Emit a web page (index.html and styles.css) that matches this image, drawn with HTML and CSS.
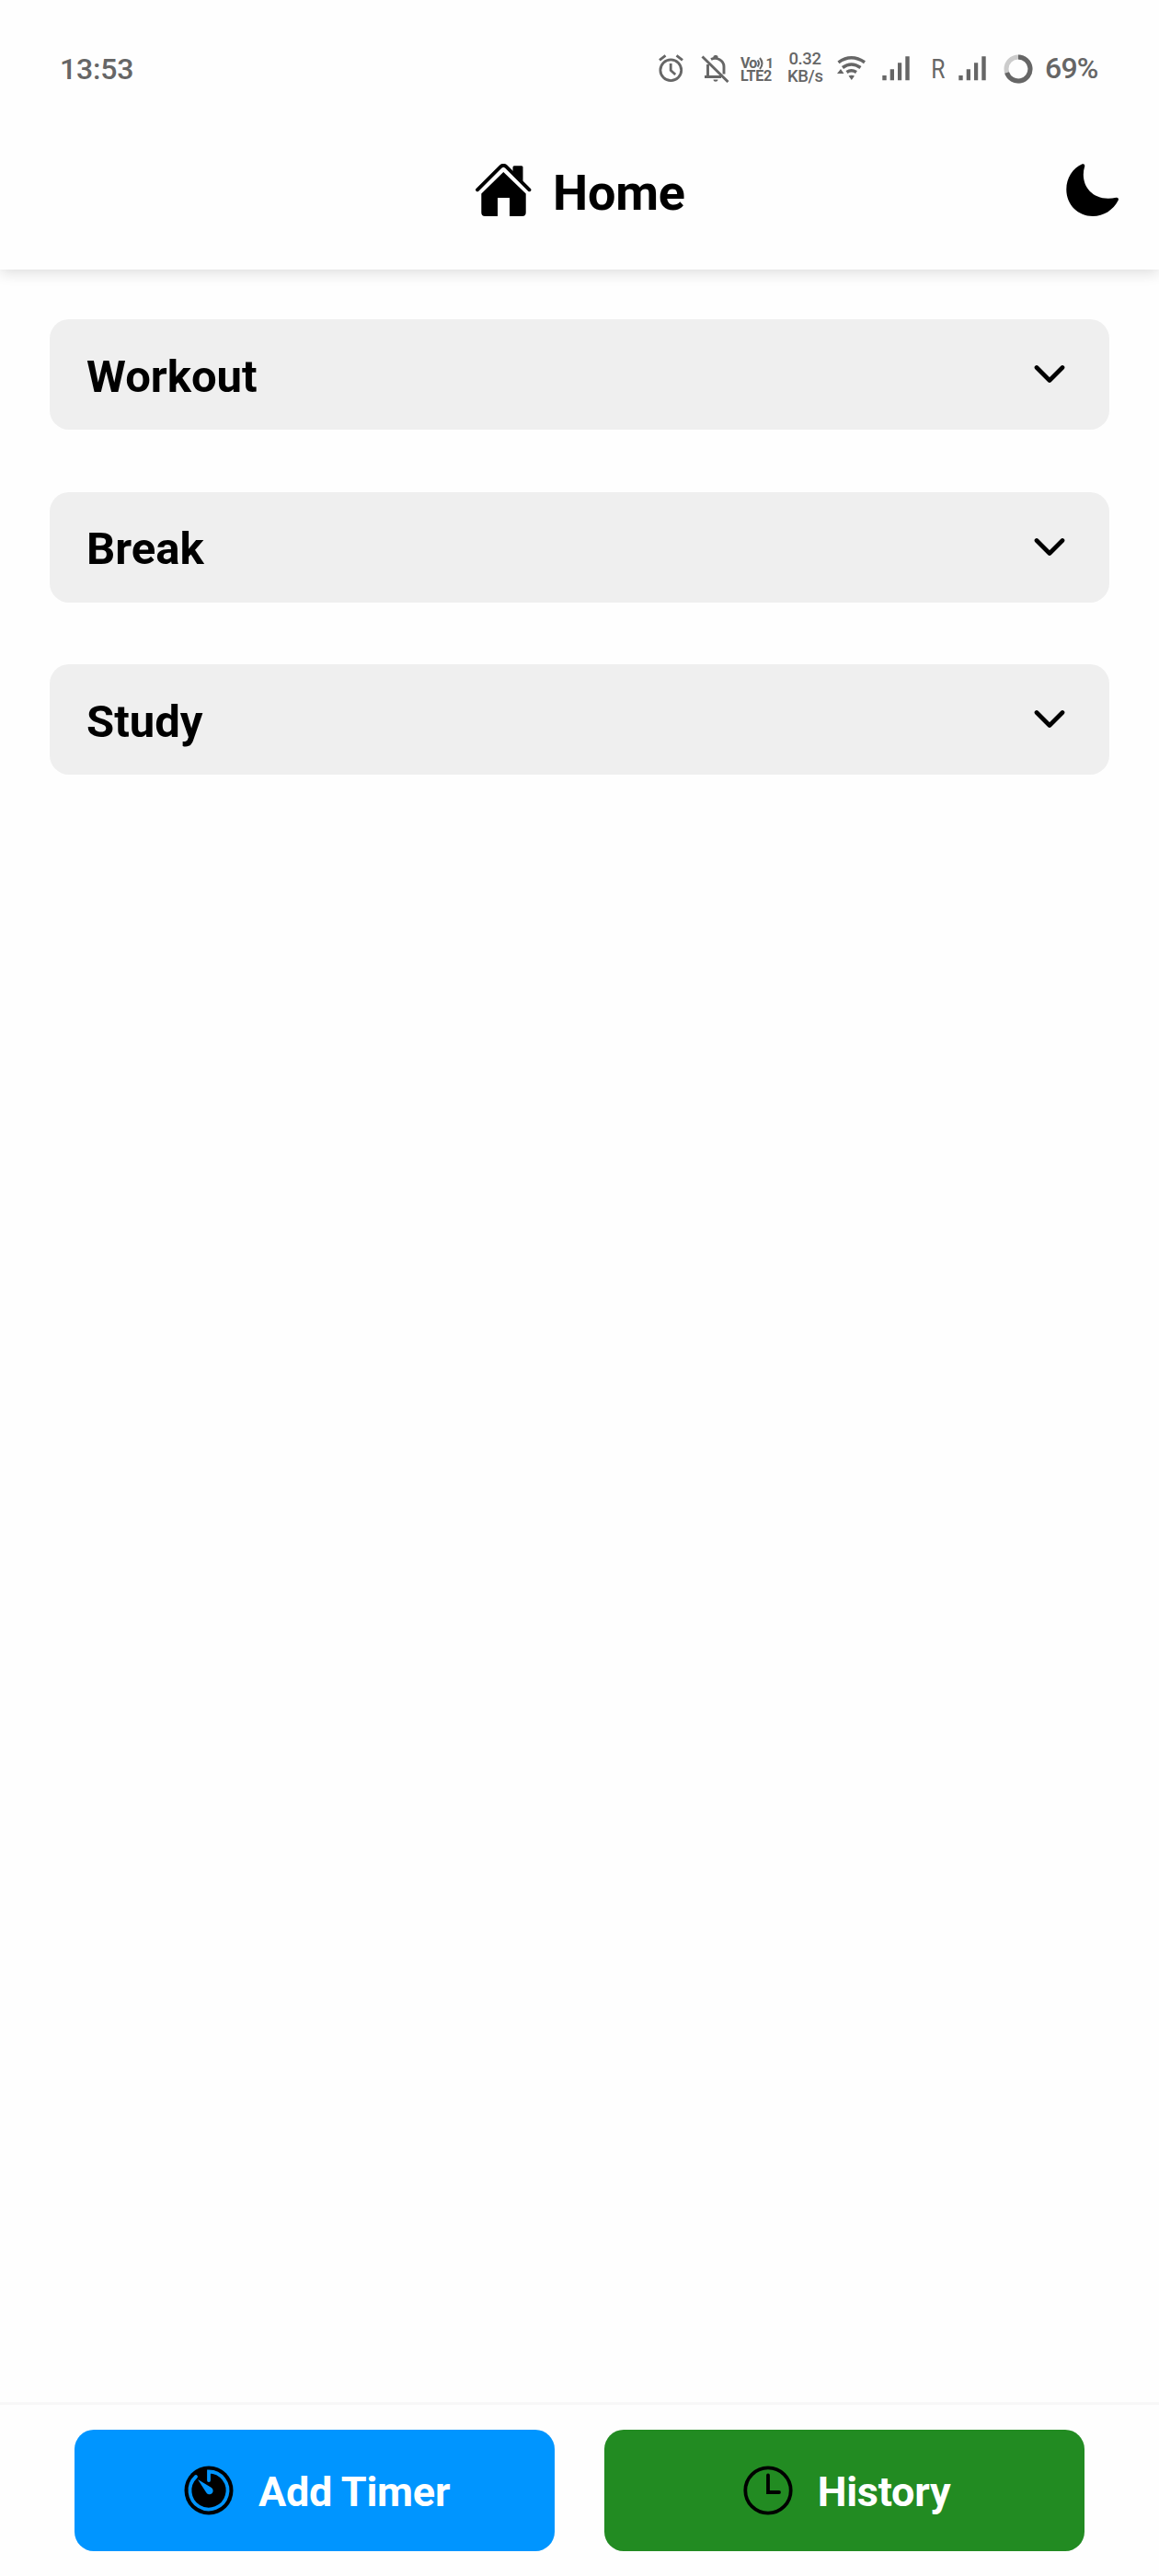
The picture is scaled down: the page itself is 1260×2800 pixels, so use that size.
FILE: index.html
```html
<!DOCTYPE html>
<html lang="en">
<head>
<meta charset="utf-8">
<title>Home</title>
<link rel="stylesheet" href="styles.css">
</head>
<body>
<div class="app">
  <div class="status">
    <span class="clock">13:53</span>
    <div class="indicators">
      <svg class="alarm" width="28" height="31" viewBox="0 0 28 31" fill="none" stroke="#666" stroke-width="2.8">
        <circle cx="13.3" cy="17.3" r="11.4"/><path d="M13.2 10v7.500l5 4.500M1 6.300l6.500-5M26 6.300l-6.500-5"/>
      </svg>
      <svg class="bell" width="31" height="31" viewBox="0 0 31 31" fill="none" stroke="#666" stroke-width="2.900">
        <path d="M1.500 2.500l28 27.500M7.500 11v13.500M4 24.500h18M11 5.500c6-3 14 1 14 8v8"/><path d="M13.500 4v-1.500c0-2 5-2 5 0V4zM13.500 27.500h5c0 3-5 3-5 0z" fill="#666" stroke="none"/>
      </svg>
      <div class="volte">
        <div class="volte-row"><span class="vo">Vo</span><svg width="8" height="14" viewBox="0 0 8 14" fill="none" stroke="#666" stroke-width="2"><path d="M.5 3.500q3 3.500 0 7M3 1q5 6 0 12"/></svg><span class="sim">1</span></div>
        <div class="lte">LTE2</div>
      </div>
      <div class="speed"><div>0.32</div><div class="unit">KB/s</div></div>
      <svg class="wifi" width="32" height="27" viewBox="0 0 32 27" fill="none" stroke="#666" stroke-width="3.500">
        <path d="M1.500 6.800q14-10 28.500 0M6 12.500q9.500-7 19.500 0M10.500 17.500q5-3.500 10.500 0"/><path d="M12.500 21.500q3.200-1.600 6.500 0L15.800 26zM0 19l4-5 3.500 5z" fill="#666" stroke="none"/>
      </svg>
      <svg class="signal" width="31" height="27" viewBox="0 0 31 27" fill="#666"><path d="M.3 21h4.400v5.300H.3zM8.700 14.300h4.300v12H8.700zM17 7.300h4.200v19H17zM25.300 0.300h4.400v26h-4.400z"/></svg>
      <span class="roaming">R</span>
      <svg class="signal second" width="31" height="27" viewBox="0 0 31 27" fill="#666"><path d="M.3 21h4.400v5.300H.3zM8.700 14.300h4.300v12H8.700zM17 7.300h4.200v19H17zM25.300 0.300h4.400v26h-4.400z"/></svg>
      <svg class="battery" width="32" height="32" viewBox="0 0 32 32" fill="none" stroke-width="5"><circle cx="16" cy="16" r="13" stroke="#ccc"/><path d="M16 3a13 13 0 1 1-12.400 17" stroke="#666"/></svg>
      <span class="percent">69%</span>
    </div>
  </div>

  <header class="header">
    <div class="title">
      <svg width="61" height="57" viewBox="0 0 61 57">
        <path d="M42 2.300h8q1.500 0 1.500 1.500V19L40.500 8.500V3.800q0-1.500 1.500-1.500z"/>
        <path d="M2 28.300L27.500 3q2.800-2.500 5.600 0L58.500 28.300" fill="none" stroke="#000" stroke-width="3.800" stroke-linecap="round"/>
        <path d="M30.300 9L54.700 32.500V53q0 4-4 4H37V37H24v20H10.300q-4 0-4-4V32.500z"/>
      </svg>
      <h1>Home</h1>
    </div>
    <svg class="moon" width="58" height="58" viewBox="0 0 58 58"><path d="M17.600 0.300Q20.500-.4 20.300 2.500C14 22 28 42.500 54.500 36.800Q57.500 36.500 56.800 39.500C51 50.500 41 57 29 57C13 57 .3 44.500 .3 28C.3 15.500 7 5 17.600.3z"/></svg>
  </header>

  <main class="list">
    <section class="card"><h2>Workout</h2><svg width="34" height="22" viewBox="0 0 34 22"><path d="M3 3.500l14 14 14-14"/></svg></section>
    <section class="card"><h2>Break</h2><svg width="34" height="22" viewBox="0 0 34 22"><path d="M3 3.500l14 14 14-14"/></svg></section>
    <section class="card"><h2>Study</h2><svg width="34" height="22" viewBox="0 0 34 22"><path d="M3 3.500l14 14 14-14"/></svg></section>
  </main>

  <footer class="footer">
    <button class="btn add">
      <svg width="54" height="54" viewBox="0 0 54 54"><circle cx="27" cy="27" r="26.500"/><path d="M27 16V6.500A20.500 20.500 0 1 1 13 12" fill="none" stroke="#0095ff" stroke-width="3.800" stroke-linecap="round"/><path d="M15 15L29.500 23.800a4 4 0 1 1-5.500 5.200z" fill="#0095ff"/></svg>
      <span>Add Timer</span>
    </button>
    <button class="btn history">
      <svg width="54" height="54" viewBox="0 0 54 54" fill="none" stroke="#000" stroke-width="3.800" stroke-linecap="round"><circle cx="27" cy="27" r="24.700"/><path d="M27 10.500V29H39"/></svg>
      <span>History</span>
    </button>
  </footer>
</div>
</body>
</html>
```
FILE: styles.css
```css
* { box-sizing: border-box; }
body { margin: 0; background: #fefefe; font-family: Roboto, sans-serif; color: #000; }
svg { display: block; flex: none; }
h1, h2 { margin: 0; }
.app { width: 1260px; height: 2800px; display: flex; flex-direction: column; }

.status { position: relative; z-index: 1; height: 149px; padding-left: 65px; padding-right: 64px; display: flex; align-items: center; justify-content: space-between; color: #666; background: #fefefe; }
.clock, .percent { font-size: 32px; font-weight: 500; line-height: 40px; letter-spacing: -0.2px; }
.indicators { display: flex; align-items: center; }
.bell { margin-left: 18px; }
.volte { width: 36px; margin-left: 12px; padding-top: 2px; font-weight: 700; white-space: nowrap; }
.volte-row { display: flex; align-items: center; height: 14px; line-height: 14px; }
.volte-row .vo { width: 19px; font-size: 16px; letter-spacing: -0.8px; }
.volte-row .sim { margin-left: 1px; font-size: 15px; }
.lte { font-size: 16px; line-height: 14px; letter-spacing: -0.3px; }
.speed { width: 38px; margin-left: 15px; margin-right: 1px; padding-bottom: 1px; text-align: center; font-size: 18.5px; font-weight: 500; line-height: 19px; letter-spacing: -0.4px; white-space: nowrap; }
.wifi { margin-left: 15px; }
.signal { margin-left: 17px; }
.roaming { width: 18px; margin-left: 21px; margin-right: 1px; font-size: 29px; line-height: 36px; transform: scaleX(0.85); }
.signal.second { margin-left: 12px; }
.battery { margin-left: 18px; }
.percent { width: 60px; margin-left: 13px; padding-bottom: 1px; letter-spacing: -0.8px; white-space: nowrap; }

.header { height: 144px; padding-bottom: 29px; padding-right: 43px; display: grid; grid-template-columns: 517px 1fr 58px; align-items: center; background: #fefefe; box-shadow: 0 3px 15px rgba(0, 0, 0, 0.14); }
.title { grid-column: 2; display: flex; align-items: center; gap: 23px; }
.title h1 { font-size: 54px; line-height: 64px; font-weight: 700; letter-spacing: -0.2px; padding-top: 6px; }

.list { flex: 1; padding: 54px; display: flex; flex-direction: column; gap: 67.5px; }
.card { height: 120px; border-radius: 21px; background: #efefef; padding: 0 48.5px 0 40px; display: flex; align-items: center; justify-content: space-between; }
.card h2 { font-size: 49px; line-height: 60px; font-weight: 700; padding-top: 5px; }
.card svg { fill: none; stroke: #000; stroke-width: 4.7; stroke-linecap: round; stroke-linejoin: round; }

.footer { height: 189px; border-top: 3px solid #f7f7f7; padding: 27px 81px; display: flex; gap: 54px; align-items: flex-start; }
.btn { flex: 1; height: 132px; border: 0; border-radius: 21px; padding: 0 0 0 5px; display: flex; align-items: center; justify-content: center; gap: 27px; color: #fff; font: 700 45px/54px Roboto, sans-serif; letter-spacing: -0.25px; }
.btn svg { margin-bottom: 1px; }
.btn span { padding-top: 4px; }
.add { background: #0095ff; }
.history { background: #228b22; }
```
